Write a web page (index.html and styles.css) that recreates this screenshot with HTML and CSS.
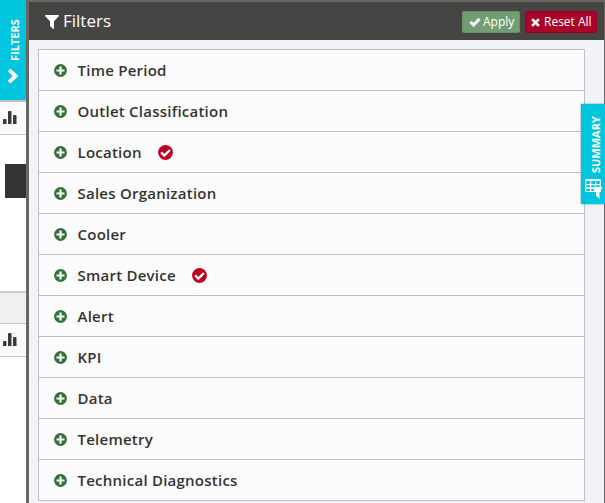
FILE: index.html
```html
<!DOCTYPE html>
<html lang="en">
<head>
<meta charset="utf-8">
<title>Filters</title>
<link rel="stylesheet" href="styles.css">
</head>
<body>
<svg class="defs" aria-hidden="true">
  <symbol id="plus" viewBox="0 0 13 13"><circle cx="6.5" cy="6.5" r="6.4" fill="#33703a"/><path d="M5.400 2.500h2.200v2.900h2.900v2.200H7.600v2.900H5.400V7.600H2.500V5.400h2.900z" fill="#fff"/></symbol>
  <symbol id="tick" viewBox="0 0 15 15"><circle cx="7.5" cy="7.5" r="7.400" fill="#c00020"/><path d="M3.200 7.400l3.100 3.100 5.600-5.500" fill="none" stroke="#fff" stroke-width="2.400"/></symbol>
  <symbol id="bars" viewBox="0 0 14 13"><path d="M0 9q0-1 1-1h1.500q1 0 1 1V13H0zM5 1q0-1 1-1h1.500q1 0 1 1V13H5zM10 5q0-1 1-1h1.500q1 0 1 1V13H10z" fill="#393939"/></symbol>
</svg>
<div class="app">
  <aside class="rail">
    <div class="filters-tab">
      <span class="vertical">FILTERS</span>
      <svg class="chevron" viewBox="0 0 12 16"><path d="M2 1.800L8.600 8 2 14.200" fill="none" stroke="#fff" stroke-width="3.900"/></svg>
    </div>
    <div class="chart-head"><svg class="bars"><use href="#bars"/></svg></div>
    <div class="chart-body"><div class="dark-block"></div></div>
    <div class="strip"></div>
    <div class="chart-head second"><svg class="bars"><use href="#bars"/></svg></div>
  </aside>
  <main class="panel">
    <header class="header">
      <svg class="funnel" viewBox="0 0 14 14"><path d="M.6 0h12.800q.8.5.3 1.200L9 6.200v7q-.4 1-1.200.5L5.300 11.300 5 10.700V6.200L.3 1.200Q-.2.5.6 0z" fill="#fff"/></svg>
      <h1 class="title">Filters</h1>
      <button class="button apply"><svg class="check" viewBox="0 0 12 10"><path d="M1.300 4.700l3.300 3.200 6-6" fill="none" stroke="#fff" stroke-width="2.900"/></svg>Apply</button>
      <button class="button reset"><svg class="cross" viewBox="0 0 10 10"><path d="M1.200 1.200l7.600 7.600M8.800 1.200L1.200 8.800" stroke="#fff" stroke-width="3"/></svg>Reset All</button>
    </header>
    <ul class="list">
      <li class="row"><svg class="plus"><use href="#plus"/></svg>Time Period</li>
      <li class="row"><svg class="plus"><use href="#plus"/></svg>Outlet Classification</li>
      <li class="row"><svg class="plus"><use href="#plus"/></svg>Location<svg class="tick"><use href="#tick"/></svg></li>
      <li class="row"><svg class="plus"><use href="#plus"/></svg>Sales Organization</li>
      <li class="row"><svg class="plus"><use href="#plus"/></svg>Cooler</li>
      <li class="row"><svg class="plus"><use href="#plus"/></svg>Smart Device<svg class="tick"><use href="#tick"/></svg></li>
      <li class="row"><svg class="plus"><use href="#plus"/></svg>Alert</li>
      <li class="row"><svg class="plus"><use href="#plus"/></svg>KPI</li>
      <li class="row"><svg class="plus"><use href="#plus"/></svg>Data</li>
      <li class="row"><svg class="plus"><use href="#plus"/></svg>Telemetry</li>
      <li class="row"><svg class="plus"><use href="#plus"/></svg>Technical Diagnostics</li>
    </ul>
  </main>
  <div class="summary-tab">
    <span class="vertical">SUMMARY</span>
    <svg class="grid-icon" viewBox="0 0 18 20"><path d="M1.500 0h13q1.500 0 1.500 1.500V13H1.500Q0 13 0 11.500v-10Q0 0 1.500 0z" fill="#fff"/><path d="M1.200 2H5V5H1.200zM6.200 2H10V5H6.200zM11.200 2h3.600V5h-3.600zM1.200 6.200H5V8.500H1.200zM6.200 6.200H10V8.500H6.200zM11.200 6.200h3.600V8h-3.600zM1.200 9.700H5V12H1.200zM6.200 9.700H9V12H6.200z" fill="#00c5de"/><path d="M9 13h2v1H9z" fill="#00c5de"/><path d="M7 8.500H17.800L14.500 12.500v7.300L11 16.700V12.500z" fill="#fff"/></svg>
  </div>
</div>
</body>
</html>
```

FILE: styles.css
```css
* { box-sizing: border-box; }
body { margin: 0; font-family: "Open Sans", sans-serif; color: #333; overflow: hidden; }
svg { display: block; flex: none; }
.defs { position: absolute; width: 0; height: 0; }
.app { position: relative; display: flex; width: 605px; height: 503px; background: #fff; }
.rail { width: 26px; flex: none; }
.filters-tab { height: 100px; background: #00c5de; display: flex; flex-direction: column; align-items: center; padding: 19px 0 0 4px; }
.vertical { writing-mode: vertical-rl; transform: rotate(180deg); color: #fff; font-weight: 700; font-size: 11px; line-height: 16px; }
.filters-tab .vertical { height: 42px; }
.chevron { width: 12px; height: 16px; margin: 7px 5px 0 0; }
.chart-head { height: 35px; background: #fbfbfb; border-top: 2px solid #bfbfbf; border-bottom: 1px solid #c6c6c6; padding: 9px 0 0 3px; }
.bars { width: 14px; height: 13px; }
.chart-body { height: 156px; padding: 29px 0 0 5px; }
.dark-block { height: 34px; background: #333; }
.strip { height: 32px; background: #f0f0f0; border-top: 2px solid #ccc; }
.chart-head.second { height: 34px; border-top: 1px solid #c6c6c6; }
.panel { flex: 1; background: #f2f3f8; border: solid #696763; border-width: 2px 1px 0 3px; }
.header { height: 38px; background: #474543; display: flex; align-items: center; padding: 0 7px 0 16px; }
.funnel { width: 14px; height: 14px; margin-top: 1px; }
.title { margin: 0 auto 0 4px; color: #fff; font-size: 17px; line-height: 24px; padding-bottom: 1px; font-weight: 400; }
.button { display: flex; align-items: center; height: 22px; margin: 2px 0 0 5px; padding: 0 5px 0 6px; border: 1px solid; border-radius: 2px; color: #fff; font: 12px/18px "Open Sans", sans-serif; white-space: nowrap; }
.apply { width: 58px; background: #739e73; border-color: #659265; }
.reset { width: 72px; background: #a90329; border-color: #900323; padding-left: 5px; }
.check { width: 12px; height: 10px; margin-right: 2px; }
.cross { width: 9px; height: 9px; margin-right: 4px; }
.list { list-style: none; width: 547px; margin: 9px 0 0 9px; padding: 0; border: 1px solid #bfbfbf; border-bottom: 0; background: #fcfcfc; }
.row { height: 41px; display: flex; align-items: center; padding: 0 0 0 15px; border-bottom: 1px solid #bfbfbf; font-size: 15px; font-weight: 600; letter-spacing: .24px; line-height: 20px; }
.plus { width: 13px; height: 13px; margin-right: 10.500px; }
.tick { width: 15px; height: 15px; margin-left: 16px; }
.summary-tab { position: absolute; left: 581px; top: 104px; width: 24px; height: 100px; background: #00c5de; display: flex; flex-direction: column; align-items: center; padding-top: 11px; box-shadow: 0 0 2px #5b9da5; }
.summary-tab .vertical { height: 58px; margin-left: 5px; }
.grid-icon { width: 18px; height: 20px; margin-top: 6px; margin-left: 2px; }
```
